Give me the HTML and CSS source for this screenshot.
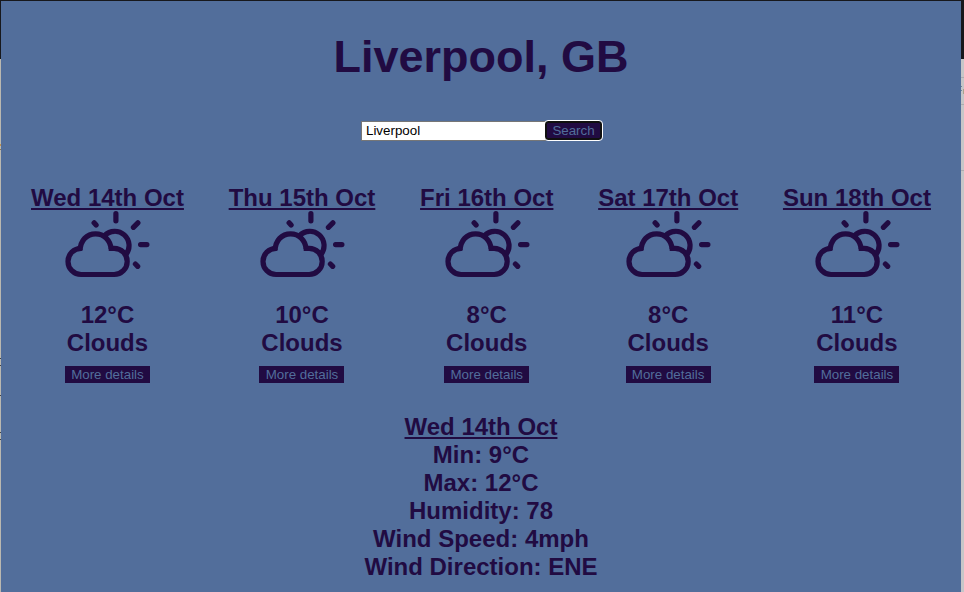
FILE: index.html
```
<!DOCTYPE html>
<html lang="en">
<head>
<meta charset="utf-8">
<title>Weather forecast</title>
<link rel="stylesheet" href="styles.css">
</head>
<body>
<svg class="defs" width="0" height="0" aria-hidden="true">
  <symbol id="cloudy" viewBox="-0.4 0 96 74">
    <g fill="none" stroke="currentColor" stroke-width="5.2" stroke-linecap="round">
      <path stroke-linecap="butt" stroke-linejoin="miter" d="M22.5 40.3H21.7A13.1 13.1 0 0 0 21.7 66.5H54.7A13.1 13.1 0 0 0 54.7 40.3H49.3"/>
      <path stroke-linecap="butt" d="M20.8 42.5C20.8 32.5 27.5 25.8 36.2 25.8C44.5 25.8 51 32 51.7 41"/>
      <path stroke-linecap="butt" d="M45.3 27.4A14.3 14.3 0 0 1 66.6 46.4"/>
      <path d="M56.5 5.7V12.8M74 19.3L78.5 14.8M81.2 36.6H87.5M76 56L78.3 58.3M34.7 14.8L36.7 17"/>
    </g>
  </symbol>
</svg>
<main class="app">
  <h1 class="city">Liverpool, GB</h1>
  <form class="search">
    <input class="search-input" type="text" value="Liverpool" aria-label="City">
    <button class="search-button" type="button">Search</button>
  </form>
  <section class="forecast">
    <article class="day"><span class="date">Wed 14th Oct</span><svg class="icon"><use href="#cloudy"/></svg><span>12°C</span><span>Clouds</span><button class="more" type="button">More details</button></article>
    <article class="day"><span class="date">Thu 15th Oct</span><svg class="icon"><use href="#cloudy"/></svg><span>10°C</span><span>Clouds</span><button class="more" type="button">More details</button></article>
    <article class="day"><span class="date">Fri 16th Oct</span><svg class="icon"><use href="#cloudy"/></svg><span>8°C</span><span>Clouds</span><button class="more" type="button">More details</button></article>
    <article class="day"><span class="date">Sat 17th Oct</span><svg class="icon"><use href="#cloudy"/></svg><span>8°C</span><span>Clouds</span><button class="more" type="button">More details</button></article>
    <article class="day"><span class="date">Sun 18th Oct</span><svg class="icon"><use href="#cloudy"/></svg><span>11°C</span><span>Clouds</span><button class="more" type="button">More details</button></article>
  </section>
  <section class="details">
    <span class="date">Wed 14th Oct</span>
    <span>Min: 9°C</span>
    <span>Max: 12°C</span>
    <span>Humidity: 78</span>
    <span>Wind Speed: 4mph</span>
    <span>Wind Direction: ENE</span>
  </section>
</main>
</body>
</html>
```
FILE: styles.css
```
* { box-sizing: border-box; }
html { height: 100%; }
body {
  margin: 0;
  height: 592px;
  padding: 1px 3px 0 1px;
  overflow: hidden;
  background:
    linear-gradient(#adadb0, #adadb0) 100% 77px / 3px 1px no-repeat,
    linear-gradient(#6d8794, #6d8794) 961px 86px / 1px 1px no-repeat,
    linear-gradient(#6d8794, #6d8794) 961px 90px / 1px 1px no-repeat,
    linear-gradient(#aaa18d, #aaa18d) 963px 89px / 1px 5px no-repeat,
    linear-gradient(#adadb0, #adadb0) 100% 104px / 3px 1px no-repeat,
    linear-gradient(#adadb0, #adadb0) 100% 170px / 3px 1px no-repeat,
    linear-gradient(#c19350, #c19350) 0 144px / 1px 2px no-repeat,
    linear-gradient(#8c7550, #8c7550) 0 149px / 1px 1px no-repeat,
    linear-gradient(#444, #444) 0 358px / 1px 1px no-repeat,
    linear-gradient(#444, #444) 0 365px / 1px 1px no-repeat,
    linear-gradient(#444, #444) 0 395px / 1px 1px no-repeat,
    linear-gradient(#444, #444) 0 432px / 1px 1px no-repeat,
    linear-gradient(#444, #444) 0 439px / 1px 1px no-repeat,
    linear-gradient(#17181c 59px, transparent 59px),
    linear-gradient(90deg, #bab8b0 50%, #c6c6c8 50%);
  color: #210b42;
  font-family: "Liberation Sans", Arial, sans-serif;
}
.defs { display: block; }
.app {
  width: 960px;
  height: 591px;
  padding-top: 30px;
  background: #526e9b;
  text-align: center;
}
.city {
  margin: 0;
  font-size: 45px;
  line-height: 51px;
}
.search {
  display: flex;
  justify-content: center;
  align-items: flex-start;
  height: 20px;
  margin: 39px 0 43px;
}
.search-input {
  width: 185px;
  height: 20px;
  padding: 0 3px 2px 4px;
  border: 1px solid #767676;
  border-radius: 0;
  background: #fff;
  color: #000;
  font: 13.333px "Liberation Sans", Arial, sans-serif;
}
.search-button {
  width: 57px;
  height: 19px;
  margin: 0 -1px 0 -1px;
  padding: 1px 0 0;
  border: 2px solid #101010;
  border-radius: 3px;
  outline: 1px solid #fff;
  background: #210b42;
  color: #526e9b;
  font: 13.333px/14px "Liberation Sans", Arial, sans-serif;
}
.forecast {
  display: flex;
  justify-content: space-between;
  padding: 0 30px;
}
.day, .details {
  display: flex;
  flex-direction: column;
  align-items: center;
  font-size: 24px;
  font-weight: bold;
  line-height: 28px;
}
.date { text-decoration: underline; }
.icon {
  display: block;
  width: 96px;
  height: 74px;
  margin: -4px 0 19px;
}
.more {
  width: 85px;
  height: 17px;
  margin-top: 9px;
  padding: 0;
  border: 0;
  background: #210b42;
  color: #526e9b;
  font: 13.333px/17px "Liberation Sans", Arial, sans-serif;
}
.details { margin-top: 30px; }
```
